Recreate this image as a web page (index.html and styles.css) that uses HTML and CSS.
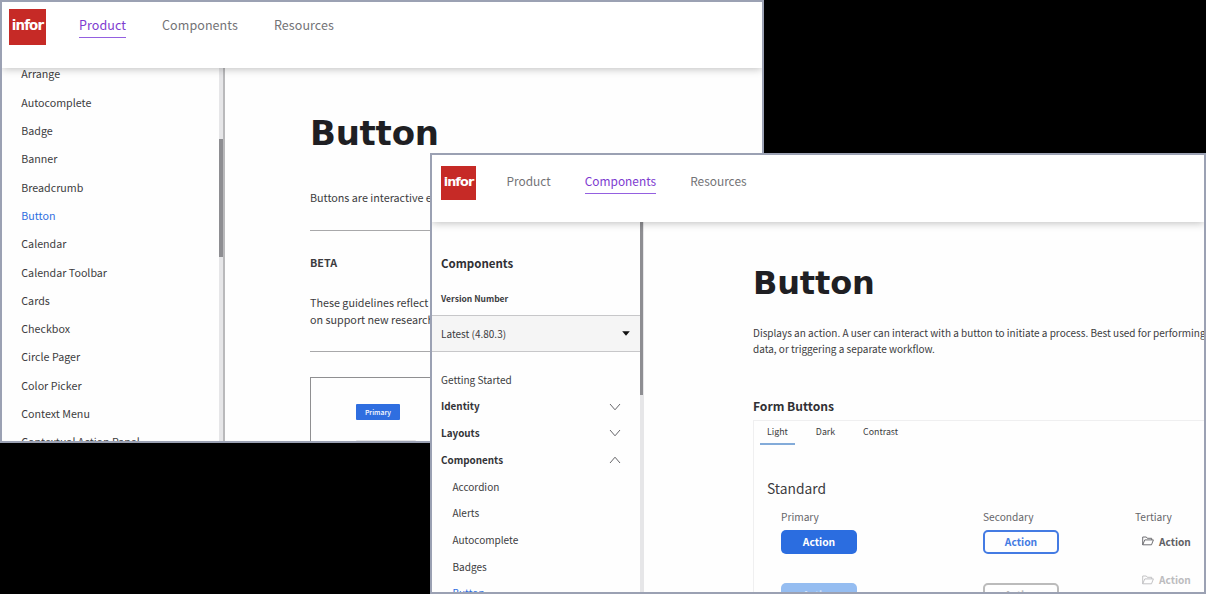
FILE: index.html
```html
<!DOCTYPE html>
<html lang="en">
<head>
<meta charset="utf-8">
<title>Button</title>
<link rel="stylesheet" href="styles.css">
</head>
<body>
<section class="window guide">
  <header class="header">
    <div class="logo"><span>infor</span></div>
    <nav class="nav"><a class="active">Product</a><a>Components</a><a>Resources</a></nav>
  </header>
  <div class="body">
    <aside class="sidebar">
      <ul class="list">
        <li>Arrange</li><li>Autocomplete</li><li>Badge</li><li>Banner</li><li>Breadcrumb</li><li class="current">Button</li><li>Calendar</li><li>Calendar Toolbar</li><li>Cards</li><li>Checkbox</li><li>Circle Pager</li><li>Color Picker</li><li>Context Menu</li><li>Contextual Action Panel</li>
      </ul>
      <div class="track"><div class="thumb"></div></div>
    </aside>
    <main class="main">
      <h1>Button</h1>
      <p class="intro">Buttons are interactive e</p>
      <h2>BETA</h2>
      <p class="note">These guidelines reflect<br>on support new research</p>
      <div class="sample"><span class="chip">Primary</span><span class="chip next"></span></div>
    </main>
  </div>
</section>

<section class="window docs">
  <header class="header">
    <div class="logo"><span>infor</span></div>
    <nav class="nav"><a>Product</a><a class="active">Components</a><a>Resources</a></nav>
  </header>
  <div class="body">
    <aside class="sidebar">
      <div class="menu">
        <h3>Components</h3>
        <h4>Version Number</h4>
        <div class="select"><span>Latest (4.80.3)</span><svg width="8" height="5" viewBox="0 0 8 5"><path d="M.2.2h7.6L4 4.8z"/></svg></div>
        <ul class="tree">
          <li>Getting Started</li>
          <li class="group">Identity<svg class="chevron" viewBox="0 0 12 8"><path d="M1 1l5 5.8L11 1"/></svg></li>
          <li class="group">Layouts<svg class="chevron" viewBox="0 0 12 8"><path d="M1 1l5 5.8L11 1"/></svg></li>
          <li class="group">Components<svg class="chevron" viewBox="0 0 12 8"><path d="M1 7l5-5.8L11 7"/></svg></li>
          <li class="child">Accordion</li><li class="child">Alerts</li><li class="child">Autocomplete</li><li class="child">Badges</li><li class="child current">Button</li>
        </ul>
      </div>
      <div class="track"><div class="thumb"></div></div>
    </aside>
    <main class="main">
      <h1>Button</h1>
      <p class="intro">Displays an action. A user can interact with a button to initiate a process. Best used for performing<br>data, or triggering a separate workflow.</p>
      <h2>Form Buttons</h2>
      <div class="panel">
        <div class="tabs"><span class="on">Light</span><span>Dark</span><span>Contrast</span></div>
        <h5>Standard</h5>
        <div class="grid">
          <div class="label">Primary</div><div class="label">Secondary</div><div class="label">Tertiary</div>
          <div class="btn primary">Action</div><div class="btn secondary">Action</div>
          <div class="tertiary"><svg viewBox="0 0 12 10"><path d="M.7 8.8V1h3.6l1 1.3h4.4v1.6M.7 8.8L2.8 3.9h8.6L9.5 8.8z"/></svg>Action</div>
          <div class="btn primary off">Action</div><div class="btn secondary off">Action</div>
          <div class="tertiary off"><svg viewBox="0 0 12 10"><path d="M.7 8.8V1h3.6l1 1.3h4.4v1.6M.7 8.8L2.8 3.9h8.6L9.5 8.8z"/></svg>Action</div>
        </div>
      </div>
    </main>
  </div>
</section>
</body>
</html>
```
FILE: styles.css
```css
* { box-sizing: border-box; margin: 0; padding: 0; }
body { position: relative; width: 1206px; height: 594px; overflow: hidden; background: #000; font-family: "Noto Sans CJK SC", "Noto Sans", sans-serif; color: #3c3c40; }
ul { list-style: none; }
svg { display: block; }

/* Overlapping windows */
.window { position: absolute; overflow: hidden; background: #fefefe; border: 2px solid #9ba1b3; display: flex; flex-direction: column; }
.guide { left: 0; top: 0; width: 764px; height: 443px; }
.docs { left: 430px; top: 153px; width: 776px; height: 441px; }
.header { position: relative; z-index: 1; flex: none; display: flex; background: #fff; box-shadow: 0 1px 8px rgba(0,0,0,.26); }
.body { flex: 1; min-height: 0; display: flex; }
.logo { display: flex; justify-content: center; align-items: center; background: #c62a26; color: #fff; font: 700 13.4px/20px "DejaVu Sans", sans-serif; letter-spacing: -.9px; padding-bottom: 2px; }
.nav { display: flex; color: #737376; white-space: nowrap; }
.nav a { border-bottom: 1px solid transparent; height: 24px; line-height: 22px; }
.nav .active { color: #7e3bd0; border-color: #9460e0; }
.sidebar { display: flex; flex: none; }
.track { flex: none; background: #e6e6e8; }
.thumb { background: #8e8e92; }
.current { color: #2f6ee0; }
.main { flex: 1; min-width: 0; overflow: hidden; white-space: nowrap; }
h1 { font-family: "DejaVu Sans", sans-serif; font-weight: 700; color: #1f1f23; }

/* Guidelines window */
.guide .header { height: 66px; padding: 7px 0 0 7px; }
.guide .logo { width: 37px; height: 36px; }
.guide .nav { margin: 5px 0 0 33px; gap: 36px; font-size: 12.5px; letter-spacing: .08px; }
.guide .list { width: 217px; padding: 0 0 0 19.3px; margin-top: -7.8px; font-size: 10.7px; white-space: nowrap; }
.guide .list li { height: 28.33px; line-height: 28.33px; }
.guide .track { width: 6px; border-right: 2px solid #b9b9bb; padding-top: 71px; }
.guide .thumb { width: 4px; height: 118px; }
.guide .main { padding-left: 85px; }
.guide h1 { margin-top: 43px; font-size: 34px; line-height: 44px; letter-spacing: -.25px; }
.guide p, .guide h2 { font-size: 10.75px; line-height: 16.5px; }
.guide .intro { margin-top: 34.5px; padding-bottom: 23.5px; border-bottom: 1px solid #a8a8aa; }
.guide h2 { margin-top: 24px; }
.guide .note { margin-top: 24px; padding-bottom: 23px; border-bottom: 1px solid #a8a8aa; }
.sample { margin-top: 25px; padding: 26px 0 0 45px; height: 200px; border: 1px solid #8f8f91; }
.chip { display: block; width: 44px; height: 16px; border-radius: 1px; background: #2f6ee0; color: #fff; font-size: 6.8px; font-weight: 500; line-height: 16px; text-align: center; }
.chip.next { margin-top: 20px; width: 60px; background: #e4e4e6; }

/* Component documentation window */
.docs .header { height: 67px; padding: 11px 0 0 9px; }
.docs .logo { width: 35px; height: 34px; font-size: 12.8px; }
.docs .nav { margin: 4px 0 0 30.5px; gap: 34px; font-size: 11.9px; }
.menu { width: 208px; }
.docs h3 { margin: 31px 0 0 9px; font-size: 11.5px; line-height: 20px; color: #303034; }
.docs h4 { margin: 17px 0 0 9px; font-size: 8.5px; line-height: 16px; }
.select { display: flex; justify-content: space-between; align-items: center; margin-top: 9px; padding: 0 10px 0 9px; height: 37px; background: #f5f5f5; border: solid #c7c7c9; border-width: 1px 0; font-size: 10px; }
.select svg { fill: #111; }
.tree { margin-top: 14.4px; font-size: 10.05px; }
.tree li { display: flex; justify-content: space-between; align-items: center; height: 26.65px; padding: 0 19px 0 9px; }
.tree .group { font-weight: 700; font-size: 9.9px; color: #333337; }
.tree .child { padding-left: 20.4px; }
.chevron { width: 12px; height: 8px; margin-top: 1px; fill: none; stroke: #66666a; }
.docs .track { width: 4px; }
.docs .thumb { width: 3px; height: 173px; }
.docs .main { padding-left: 109px; }
.docs h1 { margin-top: 39px; font-size: 32px; line-height: 44px; letter-spacing: -.15px; }
.docs .intro { margin-top: 19.5px; font-size: 10px; line-height: 16px; }
.docs h2 { margin-top: 39px; font-size: 12.1px; line-height: 20px; color: #303034; }
.panel { width: 470px; margin-top: 4.5px; height: 200px; border: 1px solid #efeff0; padding-left: 6px; }
.tabs { display: flex; gap: 14px; font-size: 8.8px; line-height: 21px; height: 24px; }
.tabs span { padding: 0 7px; }
.tabs .on { border-bottom: 2px solid #83abd9; }
.docs h5 { margin: 30px 0 0 7px; font-size: 13.8px; font-weight: 400; line-height: 26px; }
.grid { margin: 7.5px 0 0 21px; display: grid; grid-template-columns: 202px 152px 70px; grid-template-rows: 21px 53px 24px; }
.label { font-size: 10.2px; line-height: 16px; color: #66666a; }
.btn { width: 76px; height: 24px; border-radius: 5px; font-size: 10.3px; font-weight: 700; line-height: 24px; text-align: center; }
.primary { background: #2b6de0; color: #fff; }
.secondary { border: 2px solid #447be3; line-height: 20px; color: #447be3; }
.primary.off { background: #95bdf1; color: #d2e3fa; }
.secondary.off { border-color: #bbb; color: #bbb; }
.tertiary { display: flex; align-items: center; gap: 5px; height: 24px; margin-top: -.5px; padding-left: 7px; font-size: 10.1px; font-weight: 700; color: #606064; }
.tertiary svg { width: 12px; height: 10px; fill: none; stroke: currentColor; stroke-width: .9; }
.tertiary.off { margin-top: -15px; color: #bcbcbe; }
```
